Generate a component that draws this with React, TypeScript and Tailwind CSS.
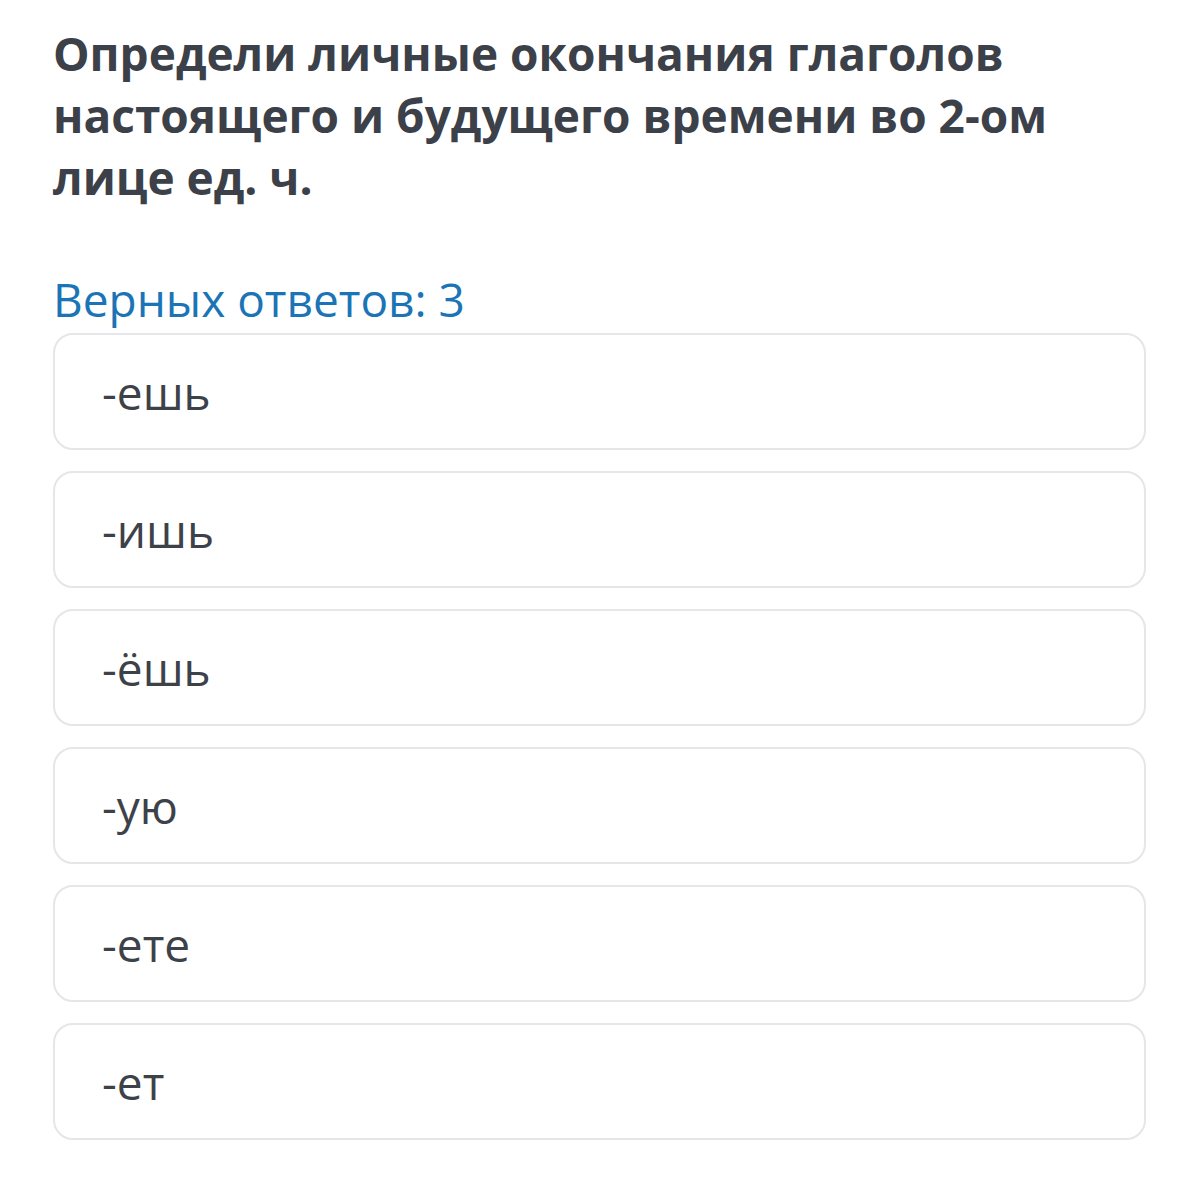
export default function App() {
  const options = ["-ешь", "-ишь", "-ёшь", "-ую", "-ете", "-ет"];

  return (
    <div className="min-h-[1200px] w-[1199px] bg-white px-[53px] pt-[22px] font-['Open_Sans',sans-serif]">
      <h1 className="text-[46px] font-bold leading-[62px] text-[#3b4049]">
        Определи личные окончания глаголов настоящего и будущего времени во
        2-ом лице ед. ч.
      </h1>

      <p className="mt-[65px] text-[46px] leading-[52px] text-[#1a74b5]">
        Верных ответов: 3
      </p>

      <div className="mt-[8px] flex w-[1093px] flex-col gap-[21px]">
        {options.map((opt) => (
          <div
            key={opt}
            className="flex h-[117px] items-center rounded-[20px] border-2 border-[#e4e6e9] bg-white pl-[47px]"
          >
            <span className="text-[46px] leading-none text-[#3d4148]">
              {opt}
            </span>
          </div>
        ))}
      </div>
    </div>
  );
}
